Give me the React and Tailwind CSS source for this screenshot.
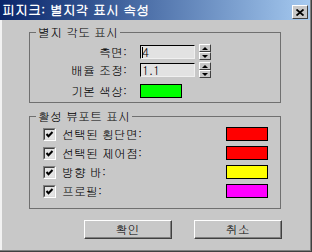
import React from 'react'

const FONT = "font-['Gulim','Noto_Sans_CJK_KR','Noto_Sans',sans-serif]"

function Group({ label, className, children }) {
  return (
    <div className={`ml-[27px] w-[252px] border border-[#707070] ${className}`}>
      <div className="-mt-[8px] ml-[6px] h-[14px] w-fit bg-[#c8c8c8] px-[2px] text-[12px] leading-[14px] text-black">
        {label}
      </div>
      {children}
    </div>
  )
}

function SpinButton({ up }) {
  return (
    <div className="flex h-[8px] w-[12px] items-center justify-center border-t border-l border-r border-b border-t-white border-l-white border-r-[#404040] border-b-[#404040] bg-[#c8c8c8]">
      {up ? (
        <div className="h-0 w-0 border-x-[3px] border-b-[3px] border-x-transparent border-b-black" />
      ) : (
        <div className="h-0 w-0 border-x-[3px] border-t-[3px] border-x-transparent border-t-black" />
      )}
    </div>
  )
}

function Spinner() {
  return (
    <div className="ml-[4px] flex flex-col">
      <SpinButton up />
      <SpinButton />
    </div>
  )
}

function Field({ value, caret }) {
  return (
    <div className="ml-[13px] flex h-[14px] w-[55px] items-center border border-t-black border-l-black border-r-[#f0f0f0] border-b-[#f0f0f0] bg-[#e2e2e2] pl-[1px] text-[12px] leading-[12px] text-black">
      {caret && <span className="mr-[-1px] inline-block h-[11px] w-px bg-black" />}
      {value}
    </div>
  )
}

function Check() {
  return (
    <div className="flex h-[13px] w-[13px] items-center justify-center border border-t-[#808080] border-l-[#808080] border-r-white border-b-white">
      <div className="flex h-[11px] w-[11px] items-center justify-center border border-t-[#404040] border-l-[#404040] border-r-[#dcdcdc] border-b-[#dcdcdc] bg-[#e4e4e4]">
        <svg width="9" height="9" viewBox="0 0 9 9">
          <polyline points="1.5,4 3.5,6.2 7.5,2" fill="none" stroke="black" strokeWidth="2" />
        </svg>
      </div>
    </div>
  )
}

function Button({ children }) {
  return (
    <div className="h-[19px] w-[88px] border border-t-white border-l-white border-r-[#404040] border-b-[#404040]">
      <div className="flex h-full w-full items-center justify-center border-r border-b border-[#808080] text-[12px] leading-[12px] text-black">
        {children}
      </div>
    </div>
  )
}

const overlays = [
  { label: '선택된 횡단면:', color: 'bg-[#ff0000]' },
  { label: '선택된 제어점:', color: 'bg-[#ff0000]' },
  { label: '방향 바:', color: 'bg-[#ffff00]' },
  { label: '프로필:', color: 'bg-[#ff00ff]' },
]

export default function App() {
  return (
    <div className={`h-[252px] w-[312px] border-r border-b border-[#404040] bg-[#c8c8c8] font-medium ${FONT}`}>
      <div className="flex h-full flex-col border-r border-b border-[#808080]">
        {/* Title bar */}
        <div className="flex h-[20px] shrink-0 bg-gradient-to-r from-[#0a246a] to-[#a6caf0]">
          <span className="pl-[2px] text-[13px] font-bold leading-[20px] text-white">피지크: 별지각 표시 속성</span>
          <div className="mt-[5px] mr-[2px] ml-auto flex h-[14px] w-[16px] items-center justify-center border border-t-white border-l-white border-r-[#404040] border-b-[#404040] bg-[#c8c8c8]">
            <svg width="8" height="7" viewBox="0 0 8 7">
              <path d="M0.5 0.5 L7.5 6.5 M7.5 0.5 L0.5 6.5" stroke="black" strokeWidth="1.8" />
            </svg>
          </div>
        </div>

        <div className="flex-1 border-l-2 border-l-[#f2f2f2]">
          <Group label="별지 각도 표시" className="mt-[12px] h-[71px]">
            <div className="mt-[4px] flex h-[18px] items-center">
              <span className="w-[97px] text-right text-[12px] leading-[14px]">측면:</span>
              <Field value="4" caret />
              <Spinner />
            </div>
            <div className="flex h-[18px] items-center">
              <span className="w-[97px] text-right text-[12px] leading-[14px]">배율 조정:</span>
              <Field value="1.1" />
              <Spinner />
            </div>
            <div className="mt-[5px] flex h-[14px] items-center">
              <span className="w-[97px] text-right text-[12px] leading-[14px]">기본 색상:</span>
              <div className="ml-[13px] h-[14px] w-[42px] border border-black bg-[#00ff00]" />
            </div>
          </Group>

          <Group label="활성 뷰포트 표시" className="mt-[13px] h-[93px]">
            <div className="mt-[4px] flex flex-col gap-[5px]">
              {overlays.map((o) => (
                <div key={o.label} className="flex h-[14px] items-center">
                  <div className="ml-[13px]">
                    <Check />
                  </div>
                  <span className="ml-[6px] text-[12px] leading-[14px]">{o.label}</span>
                  <div className={`mr-[12px] ml-auto h-[14px] w-[42px] border border-black ${o.color}`} />
                </div>
              ))}
            </div>
          </Group>

          <div className="mt-[11px] ml-[82px] flex gap-[22px]">
            <Button>확인</Button>
            <Button>취소</Button>
          </div>
        </div>
      </div>
    </div>
  )
}
